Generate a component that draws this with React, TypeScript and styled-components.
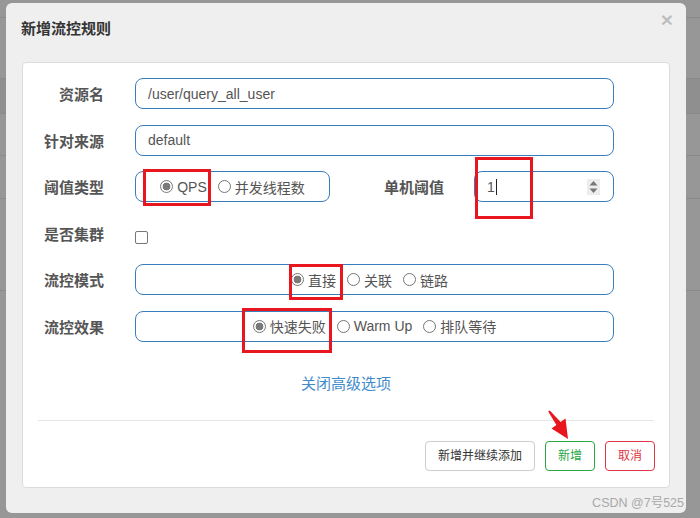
import React from "react";
import styled, { createGlobalStyle, css } from "styled-components";

const GlobalStyle = createGlobalStyle`
  html, body {
    margin: 0;
    padding: 0;
    background: #979797;
  }
  #root {
    width: 700px;
    height: 518px;
    overflow: hidden;
  }
`;

const FONT = `"Liberation Sans", "Noto Sans CJK SC", sans-serif`;

const Page = styled.div`
  position: relative;
  width: 700px;
  height: 518px;
  overflow: hidden;
  font-family: ${FONT};
  background: #979797;
`;

const Backdrop = styled.div`
  display: flex;
  flex-direction: column;
`;

const BackRow = styled.div<{ $h: number; $band?: boolean }>`
  box-sizing: border-box;
  height: ${(p) => p.$h}px;
  border-bottom: 1px solid #8a8a8a;
  background: ${(p) => (p.$band ? "#8f8f8f" : "transparent")};
`;

const Modal = styled.div`
  position: absolute;
  left: 6px;
  top: 3px;
  width: 680px;
  height: 510px;
  box-sizing: border-box;
  background: #efefef;
  border-radius: 6px;
  display: flex;
  flex-direction: column;
`;

const Header = styled.div`
  display: flex;
  justify-content: space-between;
  align-items: flex-start;
  padding: 15px 13px 0 15px;
  height: 44px;
`;

const Title = styled.h4`
  margin: 0;
  font-size: 15px;
  line-height: 22px;
  font-weight: bold;
  color: #333;
`;

const Close = styled.span`
  margin-top: -9px;
  font-size: 21px;
  line-height: 21px;
  font-weight: bold;
  color: #000;
  opacity: 0.2;
  text-shadow: 0 1px 0 #fff;
  cursor: pointer;
`;

const Body = styled.div`
  padding: 0 16px;
`;

const Panel = styled.div`
  box-sizing: border-box;
  width: 648px;
  height: 426px;
  background: #fff;
  border: 1px solid #dcdcdc;
  border-radius: 4px;
  padding-top: 15px;
  display: flex;
  flex-direction: column;
`;

const Form = styled.div`
  display: grid;
  grid-template-columns: 81px 1fr;
  column-gap: 31px;
  row-gap: 15.6px;
  padding-right: 55px;
`;

const Label = styled.div`
  height: 31px;
  display: flex;
  align-items: center;
  justify-content: flex-end;
  font-size: 15px;
  font-weight: bold;
  color: #555;
  white-space: nowrap;
`;

const boxed = css`
  box-sizing: border-box;
  height: 31px;
  border: 1px solid #3a7dbd;
  border-radius: 8px;
  background: #fff;
`;

const Field = styled.div<{ $w?: number }>`
  ${boxed};
  display: flex;
  align-items: center;
  padding: 0 12px;
  font-size: 14px;
  color: #555;
  ${(p) => p.$w && `width: ${p.$w}px; flex: none;`}
`;

const Caret = styled.span`
  display: inline-block;
  width: 1px;
  height: 16px;
  margin-left: 1px;
  background: #222;
`;

const Spinner = styled.span`
  margin-left: auto;
  margin-right: 1px;
  display: flex;
  width: 13px;
  height: 16px;
  background: #ededed;
  align-items: center;
  justify-content: center;
`;

const RadioBox = styled.div<{ $w?: number; $shift?: number }>`
  ${boxed};
  display: flex;
  align-items: center;
  justify-content: center;
  gap: 11px;
  padding-right: ${(p) => p.$shift ?? 0}px;
  ${(p) => p.$w && `width: ${p.$w}px; flex: none;`}
`;

const RadioItem = styled.label`
  display: flex;
  align-items: center;
  gap: 4px;
  font-size: 14px;
  color: #555;
  white-space: nowrap;
`;

const Circle = styled.span<{ $on?: boolean }>`
  box-sizing: border-box;
  width: 13px;
  height: 13px;
  border: 1px solid #767676;
  border-radius: 50%;
  background: ${(p) =>
    p.$on
      ? "radial-gradient(circle, #7a7a7a 0 3.6px, #fff 4.2px)"
      : "#fff"};
`;

const ThresholdRow = styled.div`
  display: flex;
  align-items: center;
`;

const InlineLabel = styled(Label)`
  flex: 1;
  padding-right: 30px;
`;

const CheckCell = styled.div`
  display: flex;
  align-items: flex-start;
`;

const Check = styled.span`
  display: block;
  box-sizing: border-box;
  margin-top: 13px;
  width: 13px;
  height: 13px;
  border: 1px solid #767676;
  border-radius: 2px;
  background: #fff;
`;

const Toggle = styled.a`
  margin-top: 32px;
  text-align: center;
  font-size: 15px;
  line-height: 20px;
  color: #428bca;
  text-decoration: none;
  cursor: pointer;
`;

const Divider = styled.div`
  margin: 26px 15px 0;
  height: 1px;
  background: #e5e5e5;
`;

const Footer = styled.div`
  display: flex;
  justify-content: flex-end;
  gap: 10px;
  padding: 20px 14px 0;
`;

const tones = {
  plain: { border: "#cccccc", text: "#333" },
  success: { border: "#28a745", text: "#28a745" },
  danger: { border: "#dc3545", text: "#dc3545" },
};

const Button = styled.button<{ $tone: keyof typeof tones }>`
  box-sizing: border-box;
  height: 30px;
  padding: 0 12px;
  font-family: ${FONT};
  font-size: 12px;
  line-height: 28px;
  background: #fff;
  border-radius: 4px;
  border: 1px solid ${(p) => tones[p.$tone].border};
  color: ${(p) => tones[p.$tone].text};
  cursor: pointer;
`;

const Mark = styled.div`
  position: absolute;
  box-sizing: border-box;
  border: 3px solid #e8161f;
  pointer-events: none;
`;

const ArrowSvg = styled.svg`
  position: absolute;
  left: 540px;
  top: 400px;
`;

const Watermark = styled.div`
  position: absolute;
  right: 16px;
  top: 495px;
  font-size: 12.5px;
  line-height: 16px;
  color: #a9a9a9;
  white-space: nowrap;
`;

type Opt = { text: string; on?: boolean };

const Radios: React.FC<{ options: Opt[]; width?: number; shift?: number }> = ({
  options,
  width,
  shift,
}) => (
  <RadioBox $w={width} $shift={shift}>
    {options.map((o) => (
      <RadioItem key={o.text}>
        <Circle $on={o.on} />
        {o.text}
      </RadioItem>
    ))}
  </RadioBox>
);

const marks = [
  { left: 143, top: 169, width: 68, height: 37 },
  { left: 475, top: 157, width: 58, height: 62 },
  { left: 289, top: 264, width: 54, height: 36 },
  { left: 242, top: 308, width: 90, height: 45 },
];

const App: React.FC = () => {
  return (
    <Page>
      <GlobalStyle />
      <Backdrop>
        <BackRow $h={18} />
        <BackRow $h={61} />
        <BackRow $h={35} $band />
        <BackRow $h={42} />
        <BackRow $h={43} />
        <BackRow $h={92} />
      </Backdrop>

      <Modal>
        <Header>
          <Title>新增流控规则</Title>
          <Close>×</Close>
        </Header>
        <Body>
          <Panel>
            <Form>
              <Label>资源名</Label>
              <Field>/user/query_all_user</Field>

              <Label>针对来源</Label>
              <Field>default</Field>

              <Label>阈值类型</Label>
              <ThresholdRow>
                <Radios
                  width={195}
                  options={[{ text: "QPS", on: true }, { text: "并发线程数" }]}
                />
                <InlineLabel>单机阈值</InlineLabel>
                <Field $w={140}>
                  1<Caret />
                  <Spinner>
                    <svg width="9" height="14" viewBox="0 0 9 14">
                      <path d="M4.5 1 L8.5 5.5 H0.5 Z M4.5 13 L8.5 8.5 H0.5 Z" fill="#777" />
                    </svg>
                  </Spinner>
                </Field>
              </ThresholdRow>

              <Label>是否集群</Label>
              <CheckCell>
                <Check />
              </CheckCell>

              <Label>流控模式</Label>
              <Radios
                shift={10}
                options={[{ text: "直接", on: true }, { text: "关联" }, { text: "链路" }]}
              />

              <Label>流控效果</Label>
              <Radios
                options={[
                  { text: "快速失败", on: true },
                  { text: "Warm Up" },
                  { text: "排队等待" },
                ]}
              />
            </Form>

            <Toggle>关闭高级选项</Toggle>
            <Divider />
            <Footer>
              <Button $tone="plain">新增并继续添加</Button>
              <Button $tone="success">新增</Button>
              <Button $tone="danger">取消</Button>
            </Footer>
          </Panel>
        </Body>
      </Modal>

      {marks.map((m, i) => (
        <Mark key={i} style={m} />
      ))}

      <ArrowSvg width="40" height="45" viewBox="0 0 40 45">
        <polygon
          points="8.2,11.6 9.8,10.4 20.6,22.1 25.5,18.5 28,39 11.5,28.5 16.4,24.9"
          fill="#e8161f"
        />
      </ArrowSvg>

      <Watermark>CSDN @7号525</Watermark>
    </Page>
  );
};

export default App;
